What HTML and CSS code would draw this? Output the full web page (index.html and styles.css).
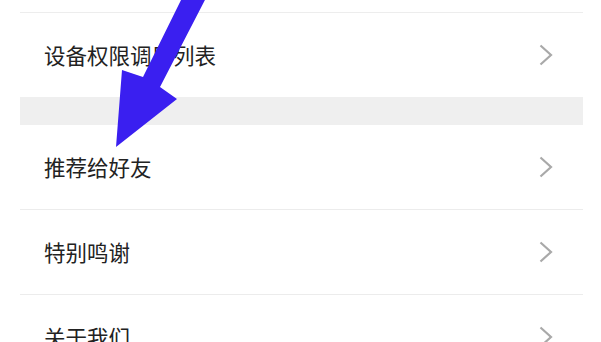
FILE: index.html
```html
<!DOCTYPE html>
<html lang="zh">
<head>
<meta charset="utf-8">
<link rel="stylesheet" href="styles.css">
</head>
<body>
<div class="page">
  <div class="list">
    <div class="top-gap"></div>
    <div class="row">
      <span class="label">设备权限调用列表</span>
      <svg class="chev" viewBox="0 0 14 22" width="14" height="22"><polyline points="1.5,1.5 12,11 1.5,20.5" fill="none" stroke="#a9a9a9" stroke-width="2.2"/></svg>
    </div>
    <div class="band"></div>
    <div class="row line">
      <span class="label">推荐给好友</span>
      <svg class="chev" viewBox="0 0 14 22" width="14" height="22"><polyline points="1.5,1.5 12,11 1.5,20.5" fill="none" stroke="#a9a9a9" stroke-width="2.2"/></svg>
    </div>
    <div class="row line">
      <span class="label">特别鸣谢</span>
      <svg class="chev" viewBox="0 0 14 22" width="14" height="22"><polyline points="1.5,1.5 12,11 1.5,20.5" fill="none" stroke="#a9a9a9" stroke-width="2.2"/></svg>
    </div>
    <div class="row">
      <span class="label">关于我们</span>
      <svg class="chev" viewBox="0 0 14 22" width="14" height="22"><polyline points="1.5,1.5 12,11 1.5,20.5" fill="none" stroke="#a9a9a9" stroke-width="2.2"/></svg>
    </div>
  </div>
  <svg class="arrow" viewBox="0 0 601 342" width="601" height="342">
    <polygon points="183,-4 207,-4 160,87 177,99 116,147 122,70 143,77" fill="#3a1ff0"/>
  </svg>
</div>
</body>
</html>
```

FILE: styles.css
```css
html, body {
  margin: 0;
  padding: 0;
  background: #ffffff;
}
.page {
  position: relative;
  width: 601px;
  height: 342px;
  overflow: hidden;
  font-family: "Noto Sans CJK SC", "Noto Sans", sans-serif;
}
.list {
  display: flex;
  flex-direction: column;
  padding: 0 18px 0 20px;
}
.top-gap {
  height: 12px;
  border-bottom: 1px solid #ededed;
}
.row {
  height: 84px;
  display: flex;
  align-items: center;
  justify-content: space-between;
  padding: 0 30px 0 24px;
  flex-shrink: 0;
}
.row.line {
  border-bottom: 1px solid #ececec;
}
.label {
  font-size: 21.5px;
  color: #222222;
  line-height: 1;
}
.chev {
  display: block;
}
.band {
  height: 28px;
  background: #efefef;
  flex-shrink: 0;
}
.arrow {
  position: absolute;
  left: 0;
  top: 0;
}
```
